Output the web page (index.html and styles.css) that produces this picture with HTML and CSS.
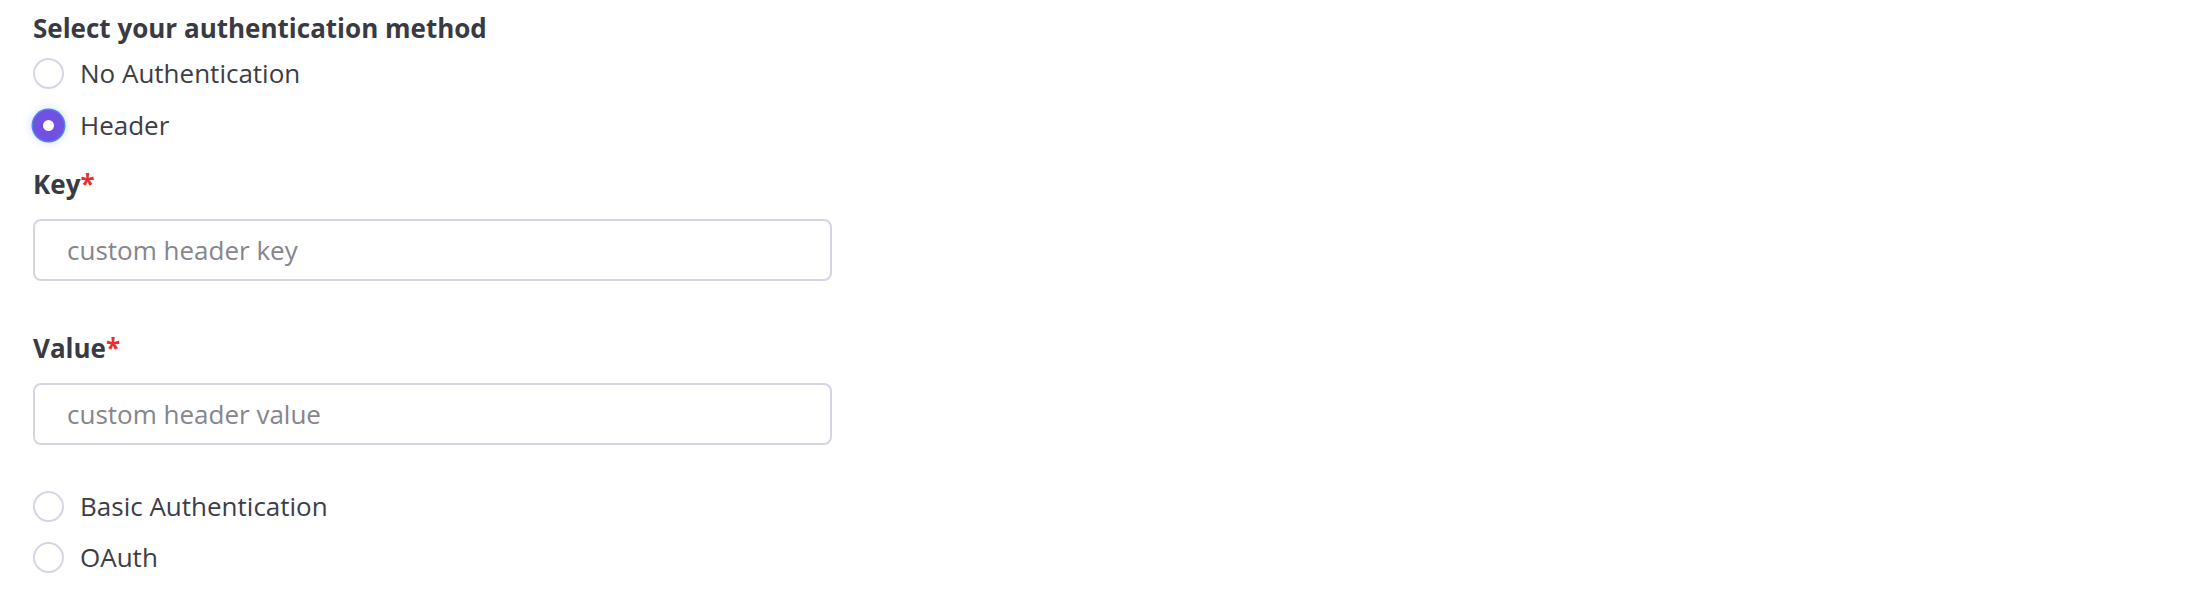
FILE: index.html
```html
<!DOCTYPE html>
<html lang="en">
<head>
<meta charset="utf-8">
<title>Authentication method</title>
<link rel="stylesheet" href="styles.css">
</head>
<body>
<form class="auth-form">
  <div class="title">Select your authentication method</div>
  <div class="options">
    <label class="option"><span class="radio"></span><span class="option-text">No Authentication</span></label>
    <label class="option"><span class="radio radio-checked"></span><span class="option-text">Header</span></label>
  </div>
  <div class="field field-first">
    <div class="field-label">Key<span class="req">*</span></div>
    <div class="input"><span class="placeholder">custom header key</span></div>
  </div>
  <div class="field">
    <div class="field-label">Value<span class="req">*</span></div>
    <div class="input"><span class="placeholder">custom header value</span></div>
  </div>
  <div class="options options-bottom">
    <label class="option"><span class="radio"></span><span class="option-text">Basic Authentication</span></label>
    <label class="option"><span class="radio"></span><span class="option-text">OAuth</span></label>
  </div>
</form>
</body>
</html>
```
FILE: styles.css
```css
html, body {
  margin: 0;
  padding: 0;
  background: #ffffff;
}
body {
  font-family: "Open Sans", "Noto Sans", sans-serif;
  color: #3c3d47;
  font-size: 26px;
  line-height: 36px;
}
.auth-form {
  display: flex;
  flex-direction: column;
  padding: 10px 0 0 33px;
}
.title {
  font-weight: 700;
  color: #393a43;
}
.options {
  display: flex;
  flex-direction: column;
  gap: 16px;
  margin-top: 9px;
}
.option {
  display: flex;
  align-items: center;
  gap: 16px;
  height: 36px;
}
.radio {
  width: 31px;
  height: 31px;
  box-sizing: border-box;
  border-radius: 50%;
  border: 2px solid #d7d5e5;
  background: #ffffff;
  flex: none;
  display: flex;
  align-items: center;
  justify-content: center;
}
.radio-checked {
  border: none;
  background: #7150e4;
  box-shadow: 0 0 0 1.5px #4d86ee, 0 0 7px 3px rgba(96, 140, 255, 0.22);
}
.radio-checked::after {
  content: "";
  width: 11px;
  height: 11px;
  border-radius: 50%;
  background: #ffffff;
}
.field {
  display: flex;
  flex-direction: column;
  gap: 17px;
  margin-top: 49px;
}
.field-first {
  margin-top: 23px;
}
.field-label {
  font-weight: 700;
  color: #393a43;
}
.req {
  color: #e8302a;
}
.input {
  box-sizing: border-box;
  width: 799px;
  height: 62px;
  border: 2px solid #d6d4e2;
  border-radius: 8px;
  padding: 0 32px;
  display: flex;
  align-items: center;
}
.placeholder {
  color: #85858d;
}
.options-bottom {
  margin-top: 43px;
  gap: 15px;
}
```
